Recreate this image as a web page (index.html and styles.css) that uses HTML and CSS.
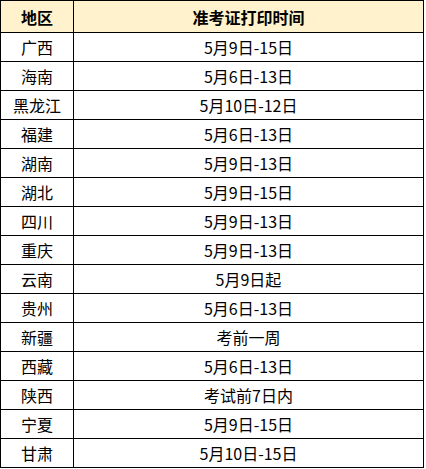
FILE: index.html
```html
<!DOCTYPE html>
<html lang="zh-CN">
<head>
<meta charset="utf-8">
<link rel="stylesheet" href="styles.css">
</head>
<body>
<table class="schedule">
  <thead>
    <tr><th class="col-region">地区</th><th class="col-time">准考证打印时间</th></tr>
  </thead>
  <tbody>
    <tr><td>广西</td><td>5月9日-15日</td></tr>
    <tr><td>海南</td><td>5月6日-13日</td></tr>
    <tr><td>黑龙江</td><td>5月10日-12日</td></tr>
    <tr><td>福建</td><td>5月6日-13日</td></tr>
    <tr><td>湖南</td><td>5月9日-13日</td></tr>
    <tr><td>湖北</td><td>5月9日-15日</td></tr>
    <tr><td>四川</td><td>5月9日-13日</td></tr>
    <tr><td>重庆</td><td>5月9日-13日</td></tr>
    <tr><td>云南</td><td>5月9日起</td></tr>
    <tr><td>贵州</td><td>5月6日-13日</td></tr>
    <tr><td>新疆</td><td>考前一周</td></tr>
    <tr><td>西藏</td><td>5月6日-13日</td></tr>
    <tr><td>陕西</td><td>考试前7日内</td></tr>
    <tr><td>宁夏</td><td>5月9日-15日</td></tr>
    <tr><td>甘肃</td><td>5月10日-15日</td></tr>
  </tbody>
</table>
</body>
</html>
```
FILE: styles.css
```css
html, body {
  margin: 0;
  padding: 0;
  background: #ffffff;
}
.schedule {
  border-collapse: collapse;
  width: 424px;
  table-layout: fixed;
  font-family: "Noto Sans CJK SC", "Noto Sans", sans-serif;
  font-size: 16px;
  color: #000;
}
.schedule th,
.schedule td {
  border: 1px solid #000;
  padding: 0;
  text-align: center;
  vertical-align: middle;
  line-height: 20px;
}
.schedule th {
  background: #fff2cc;
  font-weight: bold;
  height: 31px;
}
.schedule td {
  height: 28px;
}
.col-region {
  width: 72px;
}
```
